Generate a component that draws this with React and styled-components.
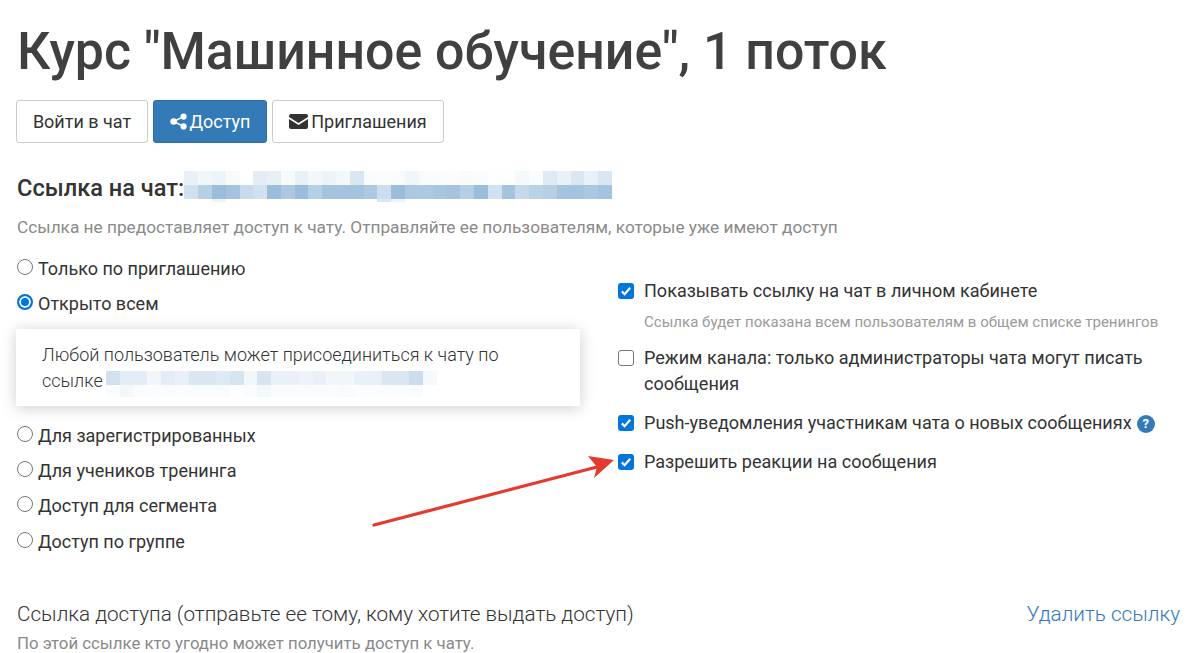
import React from "react";
import styled, { createGlobalStyle } from "styled-components";

const GlobalStyle = createGlobalStyle`
	html, body {
		margin: 0;
		padding: 0;
		background: #fff;
		overflow: hidden;
	}
	body {
		font-family: Roboto, "Liberation Sans", sans-serif;
		color: #333;
	}
`;

const Page = styled.div`
	position: relative;
	width: 1200px;
	height: 653px;
	overflow: hidden;
	padding: 0 20px 0 16px;
	box-sizing: border-box;
`;

const Title = styled.h1`
	margin: 0;
	padding: 17px 0 0 1px;
	font-size: 51.85px;
	line-height: 70px;
	font-weight: 500;
	color: #404040;
	white-space: nowrap;
`;

const Toolbar = styled.div`
	display: flex;
	gap: 5px;
	margin-top: 13px;
`;

const Button = styled.button`
	display: flex;
	align-items: center;
	justify-content: center;
	gap: 3px;
	height: 43px;
	width: ${(p) => p.$width}px;
	padding: 0;
	border-radius: 3px;
	border: 1px solid ${(p) => (p.$active ? "#2e6da4" : "#ccc")};
	background: ${(p) => (p.$active ? "#337ab7" : "#fff")};
	color: ${(p) => (p.$active ? "#fff" : "#333")};
	font-family: inherit;
	font-size: 18px;
`;

const ChatLink = styled.div`
	display: flex;
	align-items: flex-start;
	margin-top: 28px;
	height: 31px;
`;

const ChatLinkLabel = styled.span`
	padding: 3px 0 0 1px;
	font-size: 23.6px;
	line-height: 28px;
	font-weight: 500;
	color: #333;
	white-space: nowrap;
`;

const Blurred = styled.span`
	display: inline-flex;
	flex-direction: column;
	flex: none;
`;

const BlurRow = styled.span`
	display: flex;
	height: ${(p) => p.$height}px;
`;

const BlurCell = styled.span`
	flex: none;
	width: 13.8px;
	height: 100%;
`;

const Hint = styled.p`
	margin: 14px 0 0 1px;
	font-size: 17.25px;
	line-height: 22px;
	color: #8a8a8a;
	white-space: nowrap;
`;

const Columns = styled.div`
	display: flex;
	margin-top: 12.5px;
`;

const LeftColumn = styled.div`
	width: 602px;
	flex: none;
`;

const RightColumn = styled.div`
	flex: 1;
	padding-top: 27.5px;
`;

const OptionRow = styled.div`
	display: flex;
	align-items: center;
	gap: 5px;
	height: 35.3px;
	padding-left: 1px;
	font-size: 18px;
	color: #333;
`;

const RadioMark = styled.span`
	box-sizing: border-box;
	flex: none;
	width: 16px;
	height: 16px;
	margin-top: -3px;
	border-radius: 50%;
	border: ${(p) => (p.$checked ? "2px solid #0075db" : "1px solid #767676")};
	background: ${(p) => (p.$checked ? "#0075db" : "#fff")};
	box-shadow: ${(p) => (p.$checked ? "inset 0 0 0 2px #fff" : "none")};
`;

const InfoCard = styled.div`
	box-sizing: border-box;
	width: 564px;
	height: 77px;
	margin: 7.5px 0 12px;
	padding: 13px 26px;
	background: #fff;
	box-shadow: 0 2px 14px rgba(0, 0, 0, 0.2);
	font-size: 18px;
	line-height: 26px;
	font-weight: 300;
	color: #333;
	white-space: nowrap;
`;

const CardLine = styled.div`
	display: flex;
	align-items: flex-start;
	white-space: nowrap;
`;

const CardBlur = styled(Blurred)`
	margin: 3px 0 0 3px;
`;

const CheckRow = styled.div`
	display: flex;
	gap: 10px;
	margin-top: ${(p) => p.$top || 0}px;
	font-size: 18.05px;
	line-height: 26px;
	color: #333;
	white-space: ${(p) => (p.$wrap ? "normal" : "nowrap")};
	width: 545px;
`;

const CheckMark = styled.span`
	box-sizing: border-box;
	flex: none;
	display: flex;
	align-items: center;
	justify-content: center;
	width: 16px;
	height: 16px;
	margin-top: 5px;
	border-radius: 3px;
	background: ${(p) => (p.$checked ? "#0075db" : "#fff")};
	border: ${(p) => (p.$checked ? "none" : "1px solid #767676")};
`;

const CheckHint = styled.div`
	margin: 8px 0 0 26px;
	font-size: 15.05px;
	line-height: 20px;
	color: #9a9a9a;
	white-space: nowrap;
`;

const HelpBadge = styled.span`
	display: inline-flex;
	align-items: center;
	justify-content: center;
	width: 18px;
	height: 18px;
	margin-left: 5px;
	border-radius: 50%;
	background: #337ab7;
	color: #fff;
	font-size: 13px;
	font-weight: 700;
	line-height: 18px;
	vertical-align: 1px;
`;

const AccessHeader = styled.div`
	display: flex;
	justify-content: space-between;
	align-items: center;
	margin-top: 41px;
	padding-left: 1px;
`;

const AccessTitle = styled.span`
	font-size: 20.7px;
	line-height: 28px;
	font-weight: 300;
	color: #333;
`;

const DeleteLink = styled.a`
	font-size: 20.7px;
	line-height: 28px;
	font-weight: 300;
	color: #337ab7;
`;

const AccessHint = styled.div`
	margin: 4px 0 0 1px;
	font-size: 16.8px;
	line-height: 22px;
	color: #8a8a8a;
`;

const Arrow = styled.svg`
	position: absolute;
	left: 365px;
	top: 445px;
`;

// уровни яркости пикселизованной ссылки
const chatBlur = [
	{ height: 14, cells: [1.2, 0.8, 1, 0.4, 0, 1.5, 1.3, 0.4, 1.2, 0.7, 1, 0.6, 2, 0.3, 0.2, 0.3, 0.8, 0.3, 0.3, 0.2, 0.4, 0.3, 0.1, 0.1, 0.5, 0.2, 1.8, 1.2, 2, 1.2, 2] },
	{ height: 14, cells: [2.5, 4, 5.5, 5, 3, 2.5, 5.5, 4.5, 5.5, 4, 5, 5, 5, 4.5, 2.8, 5.5, 4.5, 4.5, 4.8, 5, 4, 5.5, 2.5, 5, 3.2, 3.8, 4, 5, 5, 4.6, 5] },
	{ height: 3, cells: [0, 0, 1, 0, 0, 0, 0, 0, 0, 0, 0, 0, 0, 0, 2, 1] },
];

const cardBlur = [
	{ height: 14, cells: [2.5, 1.5, 1.5, 0.8, 1.5, 1.2, 2, 2, 1.8, 2.2, 0.7, 2.2, 1.2, 1.2, 1, 1.2, 0.8, 0.8, 1.2, 1.2, 2, 2, 2.8, 0.5] },
	{ height: 12, cells: [0.2, 0.6, 0.3, 0.2, 0.3, 0.2, 0.3, 0.3, 0.3, 0.1, 0.3, 0.6, 0.3, 0.3, 0.3, 0.3, 0.3, 0.4, 0.2, 0.2, 0.2, 0.2, 0.3, 0] },
];

const levelColor = (level) => `rgba(51, 122, 183, ${level * 0.09})`;

const Pixelated = ({ rows, as: Wrap = Blurred }) => (
	<Wrap>
		{rows.map((row, r) => (
			<BlurRow key={r} $height={row.height}>
				{row.cells.map((level, c) => (
					<BlurCell key={c} style={{ background: levelColor(level) }} />
				))}
			</BlurRow>
		))}
	</Wrap>
);

const Radio = ({ checked, children }) => (
	<OptionRow>
		<RadioMark $checked={checked} />
		{children}
	</OptionRow>
);

const Check = ({ checked, top, wrap, children }) => (
	<CheckRow $top={top} $wrap={wrap}>
		<CheckMark $checked={checked}>
			{checked && (
				<svg width="12" height="12" viewBox="0 0 12 12" fill="none">
					<path d="M1.8 6.4 4.6 9.2 10.2 2.8" stroke="#fff" strokeWidth="2.2" />
				</svg>
			)}
		</CheckMark>
		<span>{children}</span>
	</CheckRow>
);

const App = () => {
	return (
		<Page>
			<GlobalStyle />
			<Title>Курс "Машинное обучение", 1 поток</Title>
			<Toolbar>
				<Button $width={132}>Войти в чат</Button>
				<Button $width={114} $active>
					<svg width="17" height="17" viewBox="0 0 17 17" fill="#fff">
						<circle cx="13.6" cy="3.6" r="3.1" />
						<circle cx="13.6" cy="13.4" r="3.1" />
						<circle cx="3.6" cy="8.5" r="3.3" />
						<path d="M3.6 8.5 13.6 3.6M3.6 8.5l10 4.9" stroke="#fff" strokeWidth="1.6" />
					</svg>
					Доступ
				</Button>
				<Button $width={172}>
					<svg width="19" height="15" viewBox="0 0 19 15" fill="#333">
						<path d="M2 0h15a2 2 0 0 1 2 2v.9L9.5 9 0 2.9V2a2 2 0 0 1 2-2Z" />
						<path d="M0 5v8a2 2 0 0 0 2 2h15a2 2 0 0 0 2-2V5l-9.5 6L0 5Z" />
					</svg>
					Приглашения
				</Button>
			</Toolbar>
			<ChatLink>
				<ChatLinkLabel>Ссылка на чат:</ChatLinkLabel>
				<Pixelated rows={chatBlur} />
			</ChatLink>
			<Hint>Ссылка не предоставляет доступ к чату. Отправляйте ее пользователям, которые уже имеют доступ</Hint>
			<Columns>
				<LeftColumn>
					<Radio>Только по приглашению</Radio>
					<Radio checked>Открыто всем</Radio>
					<InfoCard>
						<div>Любой пользователь может присоединиться к чату по</div>
						<CardLine>
							ссылке
							<Pixelated rows={cardBlur} as={CardBlur} />
						</CardLine>
					</InfoCard>
					<Radio>Для зарегистрированных</Radio>
					<Radio>Для учеников тренинга</Radio>
					<Radio>Доступ для сегмента</Radio>
					<Radio>Доступ по группе</Radio>
				</LeftColumn>
				<RightColumn>
					<Check checked>Показывать ссылку на чат в личном кабинете</Check>
					<CheckHint>Ссылка будет показана всем пользователям в общем списке тренингов</CheckHint>
					<Check top={13} wrap>
						Режим канала: только администраторы чата могут писать сообщения
					</Check>
					<Check checked top={13}>
						Push-уведомления участникам чата о новых сообщениях
						<HelpBadge>?</HelpBadge>
					</Check>
					<Check checked top={13}>Разрешить реакции на сообщения</Check>
				</RightColumn>
			</Columns>
			<AccessHeader>
				<AccessTitle>Ссылка доступа (отправьте ее тому, кому хотите выдать доступ)</AccessTitle>
				<DeleteLink>Удалить ссылку</DeleteLink>
			</AccessHeader>
			<AccessHint>По этой ссылке кто угодно может получить доступ к чату.</AccessHint>
			<Arrow width="260" height="90" viewBox="0 0 260 90">
				<line x1="9" y1="80" x2="232" y2="22" stroke="#e53a2f" strokeWidth="3.2" strokeLinecap="round" />
				<path d="M249 15 223 11 232 22 229 33Z" fill="#e53a2f" />
			</Arrow>
		</Page>
	);
};

export default App;
